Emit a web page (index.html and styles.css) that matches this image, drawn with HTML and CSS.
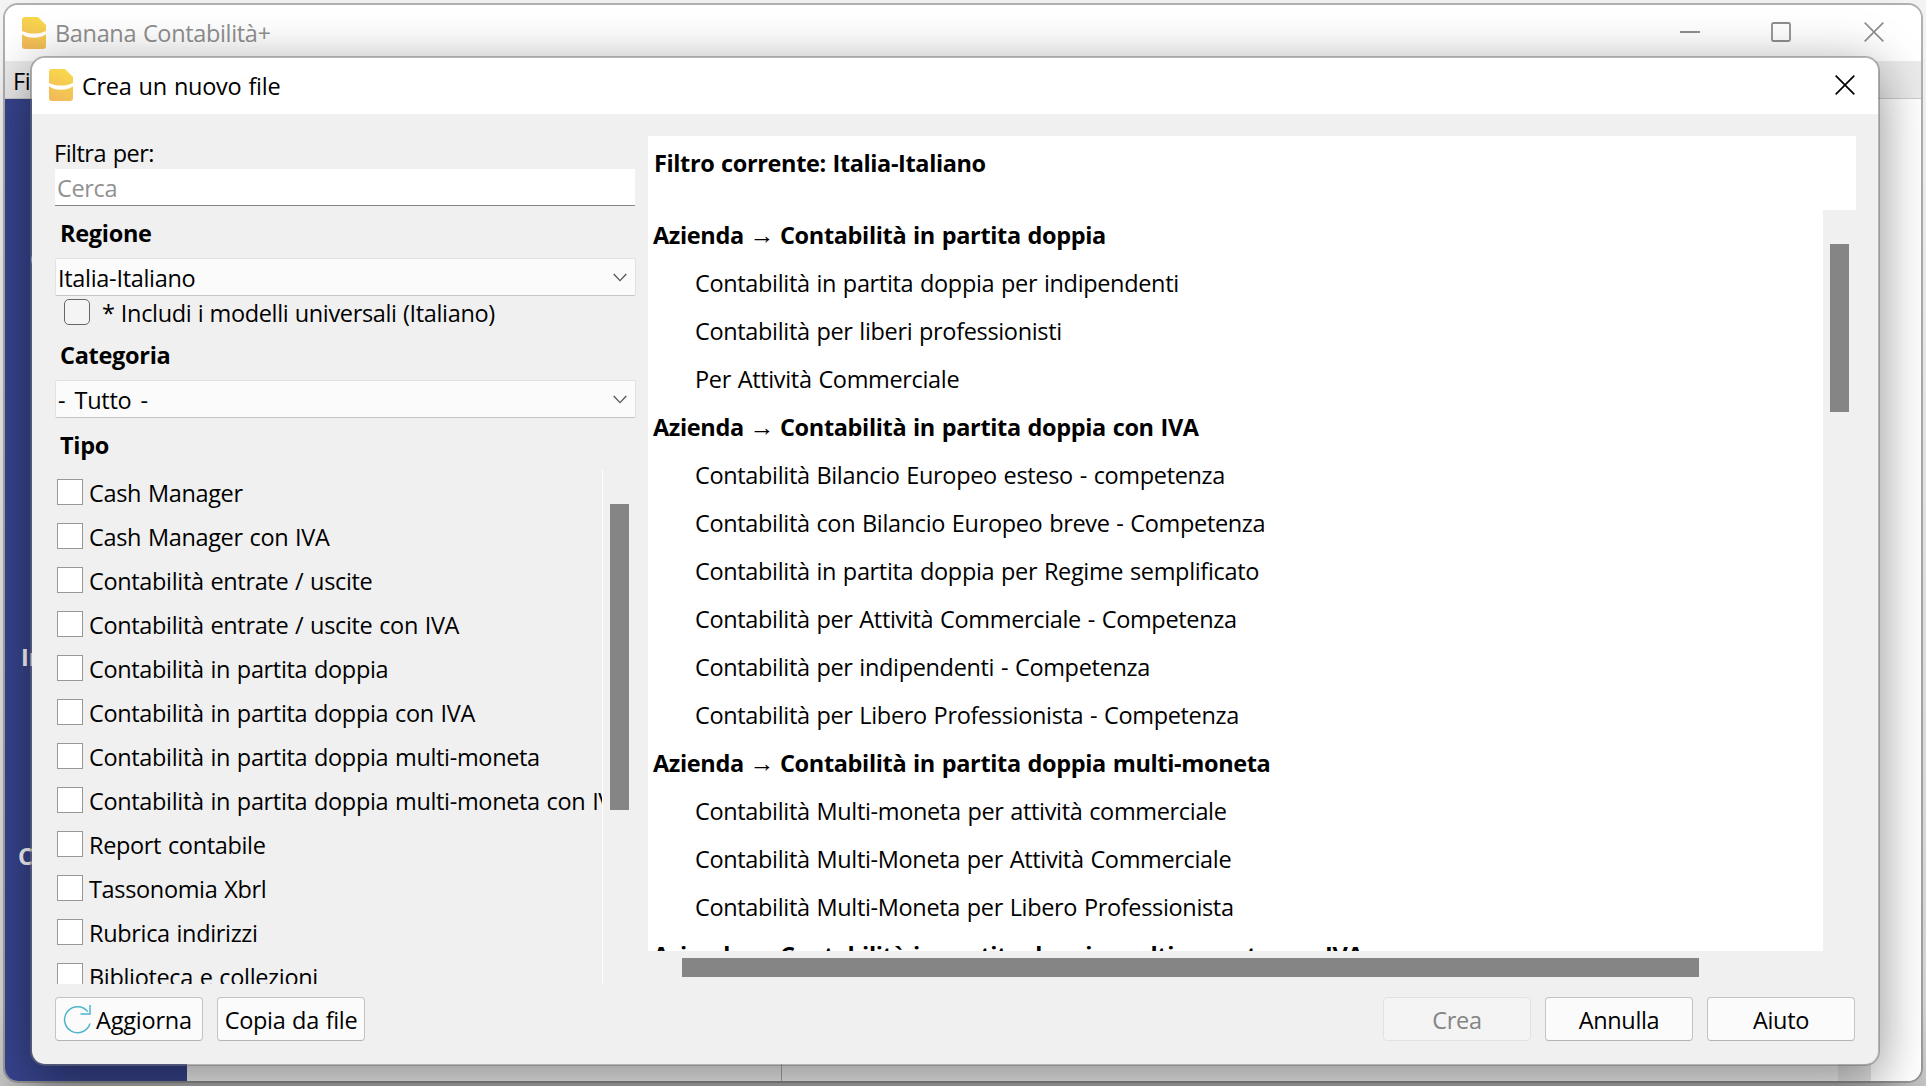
FILE: index.html
```html
<!DOCTYPE html>
<html lang="it">
<head>
<meta charset="utf-8">
<title>Banana Contabilità+</title>
<link rel="stylesheet" href="styles.css">
</head>
<body>
<svg width="0" height="0" class="defs">
  <defs>
    <linearGradient id="gold" x1="0.6" y1="0" x2="0.3" y2="1"><stop offset="0" stop-color="#f8d84c"/><stop offset="1" stop-color="#f1b95a"/></linearGradient>
    <symbol id="logo" viewBox="0 0 24 32"><path d="M3 0H16L24 8V29a3 3 0 0 1-3 3H3a3 3 0 0 1-3-3V3a3 3 0 0 1 3-3Z" fill="url(#gold)"/><path d="M0 14C7 17.4 17 17.4 24 14V17.2C18 22 6 22 0 17.2Z" fill="#fff"/></symbol>
    <symbol id="close" viewBox="0 0 20 20"><path d="M.7.7 19.3 19.3M19.3.7.7 19.3" fill="none" stroke="currentColor" stroke-width="1.7"/></symbol>
    <symbol id="chevron" viewBox="0 0 14 9"><path d="M.7 1 7 7.6 13.3 1" fill="none" stroke="#555" stroke-width="1.3"/></symbol>
  </defs>
</svg>

<div class="window main-window">
  <header class="titlebar inactive">
    <svg class="logo"><use href="#logo"/></svg>
    <h1 class="title">Banana Contabilità+</h1>
    <div class="controls">
      <svg width="20" height="20"><path d="M0 10H20" stroke="currentColor" stroke-width="2"/></svg>
      <svg width="20" height="20"><rect x="1" y="1" width="18" height="18" rx="1.5" fill="none" stroke="currentColor" stroke-width="1.8"/></svg>
      <svg width="20" height="20"><use href="#close"/></svg>
    </div>
  </header>
  <nav class="menubar">File</nav>
  <div class="workspace">
    <aside class="sidebar"><span class="side-a">C</span><span class="side-b">In</span><span class="side-c">C</span></aside>
    <div class="pane"></div>
    <div class="pane wide"></div>
    <div class="gutter"></div>
    <div class="edge"></div>
  </div>
</div>

<div class="window dialog">
  <header class="titlebar">
    <svg class="logo"><use href="#logo"/></svg>
    <h2 class="title">Crea un nuovo file</h2>
    <svg class="dialog-close" width="20" height="20"><use href="#close"/></svg>
  </header>
  <div class="body">
    <section class="filters">
      <label class="caption">Filtra per:</label>
      <div class="search">Cerca</div>
      <h3 class="group region">Regione</h3>
      <div class="combo"><span>Italia-Italiano</span><svg width="14" height="9"><use href="#chevron"/></svg></div>
      <label class="universal"><i class="check round"></i><span>* Includi i modelli universali (Italiano)</span></label>
      <h3 class="group category">Categoria</h3>
      <div class="combo loose"><span>- Tutto -</span><svg width="14" height="9"><use href="#chevron"/></svg></div>
      <h3 class="group type">Tipo</h3>
      <div class="type-area">
        <ul class="types">
          <li><i class="check"></i><span>Cash Manager</span></li>
          <li><i class="check"></i><span>Cash Manager con IVA</span></li>
          <li><i class="check"></i><span>Contabilità entrate / uscite</span></li>
          <li><i class="check"></i><span>Contabilità entrate / uscite con IVA</span></li>
          <li><i class="check"></i><span>Contabilità in partita doppia</span></li>
          <li><i class="check"></i><span>Contabilità in partita doppia con IVA</span></li>
          <li><i class="check"></i><span>Contabilità in partita doppia multi-moneta</span></li>
          <li><i class="check"></i><span>Contabilità in partita doppia multi-moneta con IVA</span></li>
          <li><i class="check"></i><span>Report contabile</span></li>
          <li><i class="check"></i><span>Tassonomia Xbrl</span></li>
          <li><i class="check"></i><span>Rubrica indirizzi</span></li>
          <li><i class="check"></i><span>Biblioteca e collezioni</span></li>
        </ul>
        <div class="type-scroll"></div>
      </div>
    </section>
    <section class="results">
      <div class="current">Filtro corrente: Italia-Italiano</div>
      <div class="list-row">
        <div class="list">
          <h4>Azienda <b class="arrow">→</b> Contabilità in partita doppia</h4>
          <p>Contabilità in partita doppia per indipendenti</p>
          <p>Contabilità per liberi professionisti</p>
          <p>Per Attività Commerciale</p>
          <h4>Azienda <b class="arrow">→</b> Contabilità in partita doppia con IVA</h4>
          <p>Contabilità Bilancio Europeo esteso - competenza</p>
          <p>Contabilità con Bilancio Europeo breve - Competenza</p>
          <p>Contabilità in partita doppia per Regime semplificato</p>
          <p>Contabilità per Attività Commerciale - Competenza</p>
          <p>Contabilità per indipendenti - Competenza</p>
          <p>Contabilità per Libero Professionista - Competenza</p>
          <h4>Azienda <b class="arrow">→</b> Contabilità in partita doppia multi-moneta</h4>
          <p>Contabilità Multi-moneta per attività commerciale</p>
          <p>Contabilità Multi-Moneta per Attività Commerciale</p>
          <p>Contabilità Multi-Moneta per Libero Professionista</p>
          <h4>Azienda <b class="arrow">→</b> Contabilità in partita doppia multi-moneta con IVA</h4>
        </div>
        <div class="list-scroll"></div>
      </div>
      <div class="hscroll"></div>
    </section>
  </div>
  <footer class="actions">
    <button class="btn refresh"><svg width="28" height="28" viewBox="0 0 28 28"><path d="M27 18.5A13 13 0 1 1 24.8 6.6M27 0V9H17.5" fill="none" stroke="#4db5cc" stroke-width="1.5"/></svg><span>Aggiorna</span></button>
    <button class="btn">Copia da file</button>
    <span class="spacer"></span>
    <button class="btn" disabled>Crea</button>
    <button class="btn">Annulla</button>
    <button class="btn">Aiuto</button>
  </footer>
</div>
</body>
</html>
```
FILE: styles.css
```css
* { box-sizing: border-box; margin: 0; padding: 0; }
body {
  width: 1926px; height: 1086px; overflow: hidden; position: relative;
  font: 23.5px/32px "Open Sans", "Noto Sans", sans-serif;
  letter-spacing: -0.34px; word-spacing: 1px; color: #000; white-space: nowrap;
  background: linear-gradient(90deg, rgba(255,255,255,.3), transparent 50px, transparent 1880px, rgba(255,255,255,.3)),
    linear-gradient(#f0f0f0 0, #eee 5px, #c4c4c4 1000px, #a8a8a8 1086px);
}
.defs { position: absolute; }
svg { display: block; flex: none; overflow: visible; }
h1, h2 { font-size: inherit; font-weight: 400; }
.window { position: absolute; display: flex; flex-direction: column; overflow: hidden; background-clip: padding-box; border: 2px solid rgba(110,110,110,.5); border-radius: 15px; }
.main-window { left: 3px; top: 3px; width: 1920px; height: 1080px; background-color: #fff; }
.dialog { left: 30px; top: 56px; width: 1850px; height: 1010px; background-color: #f0f0f0; box-shadow: 0 26px 50px rgba(0,0,0,.25), 0 2px 50px rgba(0,0,0,.22); }
.titlebar { height: 56px; flex: none; display: flex; align-items: center; background: #fff; padding-left: 17px; }
.dialog .titlebar { padding-bottom: 1px; word-spacing: 1.2px; letter-spacing: -.27px; }
.logo { width: 24px; height: 32px; margin-bottom: 1px; }
.title { margin-left: 9px; }
.inactive { color: #8f8f8f; }
.controls { margin-left: auto; display: flex; gap: 72px; padding-right: 37px; margin-bottom: 2px; }
.controls svg:nth-child(2) { margin-right: 1px; }
.controls svg:first-child { margin-right: -1px; }
.dialog-close { margin-left: auto; margin-right: 23px; margin-bottom: 1px; }
.menubar { height: 38px; flex: none; background: #ebebeb; border-bottom: 1px solid #ccc; padding: 4px 8px; }
.workspace { flex: 1; display: flex; }
.sidebar { position: relative; width: 182px; background: #38458f; color: #fff; font-weight: 700; }
.sidebar span { position: absolute; }
.side-a { left: 25px; top: 144px; }
.side-b { left: 16px; top: 542px; }
.side-c { left: 13px; top: 741px; }
.pane { width: 595px; background: #f6f6f6; border-right: 1px solid #aaa; }
.pane.wide { width: 1056px; border: 0; }
.gutter { width: 33px; background: #e4e4e4; }
.edge { flex: 1; background: #fff; }
.body { display: flex; height: 870px; padding: 22px 22px 0 23px; flex: none; }
.filters { width: 580px; margin-right: 13px; }
.caption { display: block; height: 33px; line-height: 35px; margin-left: -1px; letter-spacing: -.5px; }
.search { height: 37px; background: #fff; border-bottom: 1px solid #858585; color: #919191; padding-left: 2px; line-height: 39px; }
.group { font-size: inherit; font-weight: 700; padding-left: 5px; letter-spacing: -.3px; line-height: 32px; }
.region { height: 52px; padding-top: 11px; }
.category { height: 55px; padding-top: 14px; }
.type { height: 52px; padding-top: 11px; }
.combo { width: 581px; height: 38px; background: #fbfbfb; border: 1px solid #e2e2e2; border-bottom-color: #c6c6c6; border-radius: 2px; display: flex; align-items: center; justify-content: space-between; padding: 2px 8px 0 2px; letter-spacing: -.3px; }
.combo svg { margin-bottom: 2px; }
.loose { word-spacing: 3.5px; }
.universal { display: flex; height: 29px; padding: 3px 0 0 9px; word-spacing: .5px; }
.universal span { margin-top: -2px; }
.check { width: 26px; height: 26px; background: #fff; border: 1px solid #999; flex: none; }
.check.round { background: #f4f4f4; border: 1.5px solid #666; border-radius: 5px; margin-right: 12px; }
.type-area { display: flex; height: 514px; }
.types { list-style: none; width: 548px; border-right: 1px solid #fff; overflow: hidden; padding-top: 9px; }
.types li { display: flex; height: 44px; padding-left: 2px; gap: 6px; }
.types span { margin-top: -2px; }
.type-scroll { width: 19px; height: 306px; margin: 34px 0 0 7px; background: #858585; }
.results { flex: 1; }
.current { height: 74px; background: #fff; font-weight: 700; letter-spacing: -.38px; padding: 11px 6px; }
.list-row { display: flex; }
.list { width: 1175px; height: 741px; background: #fff; overflow: hidden; padding-left: 5px; }
.list h4 { font-size: inherit; letter-spacing: -.35px; height: 48px; line-height: 51px; }
.list p { height: 48px; line-height: 50px; padding-left: 42px; }
.arrow { font-weight: 400; font-size: 25px; line-height: 1; margin: 0 -1px; }
.list-scroll { width: 19px; height: 168px; margin: 34px 0 0 7px; background: #858585; }
.hscroll { width: 1017px; height: 19px; margin: 7px 0 0 34px; background: #858585; }
.actions { display: flex; padding: 13px 23px 0 23px; gap: 14px; }
.btn { width: 148px; height: 44px; font: inherit; letter-spacing: inherit; word-spacing: inherit; color: #000; background: #fbfbfb; border: 1px solid #c4c4c4; border-bottom-color: #b4b4b4; border-radius: 4px; padding-top: 2px; white-space: nowrap; }
.btn:disabled { color: #848484; background: #f4f4f4; border-color: #e2e2e2; }
.refresh { display: flex; align-items: center; padding-left: 7px; gap: 5px; letter-spacing: -.2px; }
.refresh svg { margin-bottom: 2px; }
.spacer { flex: 1; }
```
